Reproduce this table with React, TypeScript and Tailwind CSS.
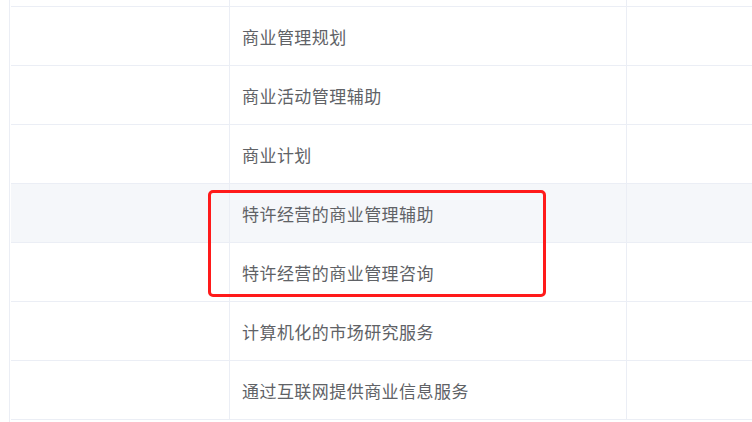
import React from 'react';

const rows = [
  '商业管理规划',
  '商业活动管理辅助',
  '商业计划',
  '特许经营的商业管理辅助',
  '特许经营的商业管理咨询',
  '计算机化的市场研究服务',
  '通过互联网提供商业信息服务',
];

const App = () => {
  return (
    <div
      className="relative w-[752px] h-[422px] overflow-hidden bg-white pl-[9px]"
      style={{ fontFamily: '"Noto Sans CJK SC", "Noto Sans", sans-serif' }}
    >
      <div className="h-full border-l border-[#ebeef5] pl-[1px]">
        <div className="flex h-[7px] border-b border-[#ebeef5]">
          <div className="w-[219px] border-r border-[#ebeef5]" />
          <div className="w-[397px] border-r border-[#ebeef5]" />
          <div className="flex-1" />
        </div>
        {rows.map((name, i) => (
          <div
            key={i}
            className={
              'flex h-[59px] border-b border-[#ebeef5] ' +
              (i === 3 ? 'bg-[#f5f7fa]' : 'bg-white')
            }
          >
            <div className="w-[219px] border-r border-[#ebeef5]" />
            <div className="w-[397px] border-r border-[#ebeef5] flex items-center pl-[12px] pt-[1px] text-[17px] tracking-[0.45px] text-[#606266]">
              {name}
            </div>
            <div className="flex-1" />
          </div>
        ))}
      </div>
      <div className="absolute left-[208px] top-[190px] w-[338px] h-[107px] border-[3px] border-[#ff1a1a] rounded-[5px]" />
    </div>
  );
};

export default App;
